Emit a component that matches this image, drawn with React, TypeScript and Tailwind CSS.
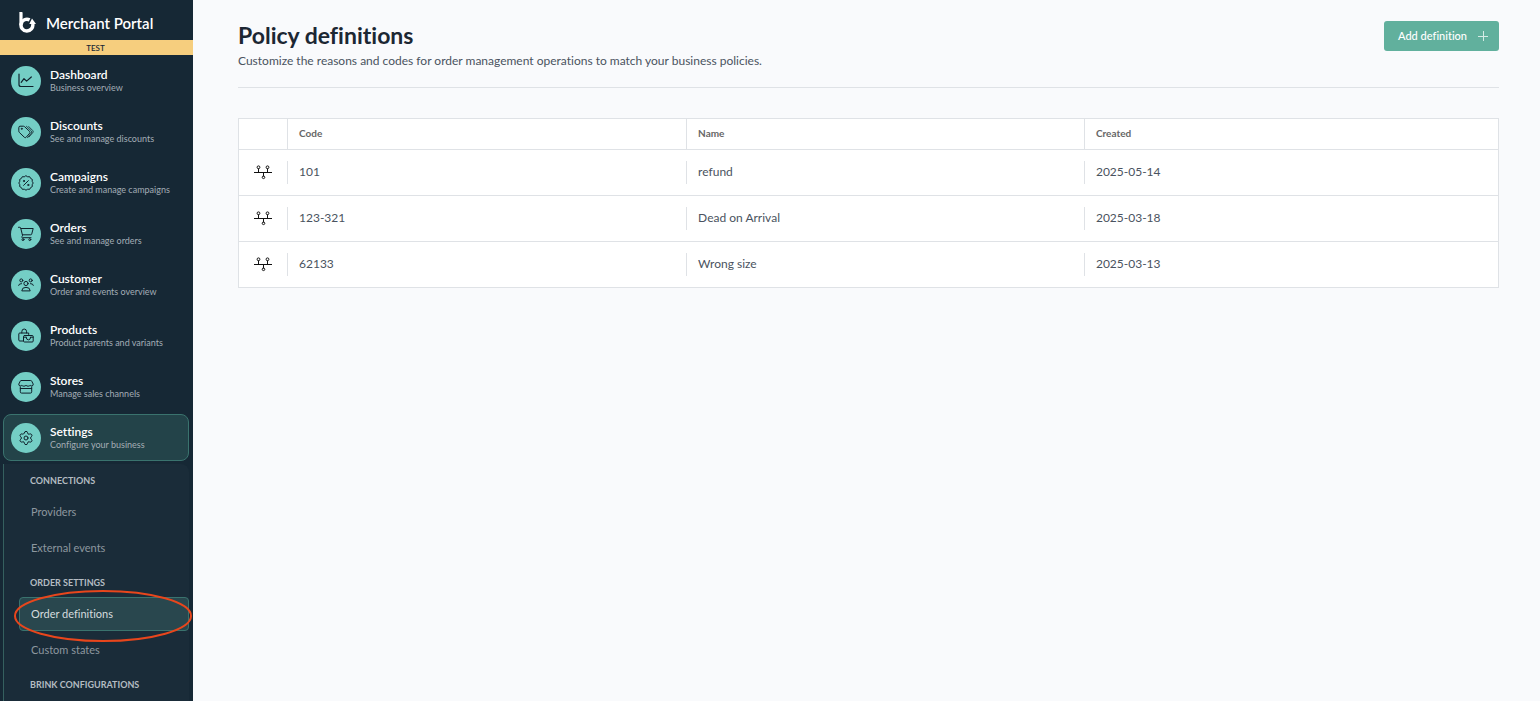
import type { ReactNode } from "react";
import { Settings } from "lucide-react";

function Icon({ children }: { children: ReactNode }) {
  return (
    <svg
      viewBox="0 0 16 16"
      className="size-4"
      fill="none"
      stroke="currentColor"
      strokeWidth="1"
      strokeLinecap="round"
      strokeLinejoin="round"
      aria-hidden="true"
    >
      {children}
    </svg>
  );
}

const sections: { title: string; text: string; icon: ReactNode; active?: boolean }[] = [
  {
    title: "Dashboard",
    text: "Business overview",
    icon: (
      <Icon>
        <path d="M1 1v10.5q0 2 2 2H15" strokeWidth="1.2" />
        <path d="m3.2 9.300 2.800-3.600 2.600 2.400L13.300 4" strokeWidth="1.2" />
      </Icon>
    ),
  },
  {
    title: "Discounts",
    text: "See and manage discounts",
    icon: (
      <Icon>
        <path d="M.8 3.400q0-1.200 1.200-1.200h3.400q.7 0 1.200.5l5 4.700q.9.900.1 1.800l-3.600 4.100q-.8.800-1.700 0L1.300 8.400Q.8 8 .8 7.200z" />
        <path d="M8.400 2.300l5 4.700q1 1 .1 2l-4 4.600M10.700 2.500l4 4q1 1 .1 2.100l-3.700 4.300" strokeWidth=".8" />
        <circle cx="3.700" cy="4.800" r=".5" />
      </Icon>
    ),
  },
  {
    title: "Campaigns",
    text: "Create and manage campaigns",
    icon: (
      <Icon>
        <path d="M8 .8l1.700 1 2-.1.900 1.700 1.700 1-.1 2L15.200 8l-1 1.700.1 1.900-1.700 1-.900 1.700-2-.1-1.700 1-1.700-1-2 .1-.900-1.700-1.700-1 .1-1.900L.8 8l1-1.700-.1-1.900 1.700-1 .900-1.700 2 .1z" />
        <path d="M10.400 5.600l-4.800 4.800" />
        <circle cx="5.900" cy="6" r=".6" />
        <circle cx="10.200" cy="10" r=".6" />
      </Icon>
    ),
  },
  {
    title: "Orders",
    text: "See and manage orders",
    icon: (
      <Icon>
        <path d="M.5 1.300h1.300q.7 0 .9.700l1.800 7.300q.2.900-.6 1.200-.6 1 .5 1.200H13M3 2.500h12.200l-1.500 5.700q-.2.600-.9.600H4.500" />
        <circle cx="5" cy="13.600" r="1" />
        <circle cx="11.800" cy="13.600" r="1" />
      </Icon>
    ),
  },
  {
    title: "Customer",
    text: "Order and events overview",
    icon: (
      <Icon>
        <circle cx="3.300" cy="3.400" r="1.500" />
        <circle cx="12.700" cy="3.400" r="1.500" />
        <circle cx="8" cy="6.500" r="2.100" />
        <path d="M.6 8.400Q.8 6.500 3.500 6.600M15.400 8.400q-.2-1.900-2.900-1.800M3.800 13.500q.1-3.200 4.200-3.200t4.200 3.200z" />
      </Icon>
    ),
  },
  {
    title: "Products",
    text: "Product parents and variants",
    icon: (
      <Icon>
        <path d="M5 13H1.800q-1 0-1-1V6q0-1 1-1h8.900v1.500M3.800 5V3.800Q3.800 1 6.200 1t2.400 2.800V5" />
        <rect x="5.500" y="7.500" width="9.700" height="6.500" rx="1" />
        <path d="M5.500 9.200h2.300M13 9.200h2.200M8.200 9.200q0 2.700 2.200 2.700t2.200-2.700" />
      </Icon>
    ),
  },
  {
    title: "Stores",
    text: "Manage sales channels",
    icon: (
      <Icon>
        <path d="M3.300 1.500h9.400q.8 0 1.100.8L15.200 5q.3 1.500-1.200 2-1.300.2-1.900-.8-.6 1-2 1T8 6.200q-.7 1-2.100 1t-2-1Q3.300 7.200 2 7 .5 6.500.8 5l1.400-2.700q.3-.8 1.100-.8zM2.300 8v4.800q0 1.300 1.300 1.300h8.800q1.300 0 1.300-1.300V8M2.300 9.500h11.400" />
      </Icon>
    ),
  },
  {
    title: "Settings",
    text: "Configure your business",
    active: true,
    icon: <Settings className="size-4" strokeWidth={1.5} aria-hidden="true" />,
  },
];

const groups: { heading: string; items: string[] }[] = [
  { heading: "CONNECTIONS", items: ["Providers", "External events"] },
  { heading: "ORDER SETTINGS", items: ["Order definitions", "Custom states"] },
  { heading: "BRINK CONFIGURATIONS", items: [] },
];

const rows = [
  { code: "101", name: "refund", created: "2025-05-14" },
  { code: "123-321", name: "Dead on Arrival", created: "2025-03-18" },
  { code: "62133", name: "Wrong size", created: "2025-03-13" },
];

function Logo() {
  return (
    <svg viewBox="0 0 18 22" className="h-[22px] w-[18px]" fill="none" aria-hidden="true">
      <path d="M.4 1h2.400q.8 0 .8.800V14H.4z" fill="#fff" />
      <path d="M10.600 8.900A5.900 5.900 0 1 0 13.700 13" stroke="#fff" strokeWidth="3.500" />
      <path d="M10.300 13l2.700-5.500L17 13z" fill="#fff" />
    </svg>
  );
}

function DefinitionIcon() {
  return (
    <svg viewBox="0 0 18 16" className="mx-auto mb-px h-4 w-[18px]" fill="none" stroke="#111" strokeWidth="1" aria-hidden="true">
      <path d="M0 8.500h18M4.500 8.500v-4M13.500 8.500v-4M9.500 8.500v4" />
      <circle cx="4.500" cy="3.300" r="1.400" />
      <circle cx="13.500" cy="3.300" r="1.400" />
      <circle cx="9.500" cy="13.300" r="1.300" />
    </svg>
  );
}

function HeadCell({ children }: { children: ReactNode }) {
  return (
    <th className="border-b border-l border-[#dfe2e6] py-0 pr-0 pl-[11px] font-bold">
      <div className="pb-0.5">{children}</div>
    </th>
  );
}

function Divided({ children }: { children: ReactNode }) {
  return (
    <td className="border-b border-[#dfe2e6] p-0">
      <div className="flex h-[23px] items-center border-l border-[#dfe2e6] pb-0.5 pl-[11px]">{children}</div>
    </td>
  );
}

export default function App() {
  return (
    <div className="flex h-screen overflow-hidden bg-[#f9fafc] font-['Lato','Noto_Sans',sans-serif] text-[#4a5360] [font-variant-ligatures:none]">
      <aside className="flex w-[193px] shrink-0 flex-col overflow-hidden bg-[#162835]">
        <header className="flex h-10 shrink-0 items-center gap-[9px] pt-1 pl-[19px] text-white">
          <Logo />
          <span className="pt-0.5 text-[15px] font-semibold whitespace-nowrap">Merchant Portal</span>
        </header>
        <div className="flex h-[15px] shrink-0 items-center justify-center bg-[#f6ce7e] pr-0.5 text-[8px] font-semibold text-[#162835]">
          TEST
        </div>
        <nav className="flex flex-1 flex-col pt-0.5" aria-label="Main">
          <ul className="flex flex-col gap-1 pr-1 pl-[3px]">
            {sections.map((s) => (
              <li key={s.title}>
                <a
                  href="#"
                  className={
                    s.active
                      ? "flex h-[47px] items-center gap-[9px] rounded-lg border border-[#3a736e] bg-[#234349] pl-[7px]"
                      : "flex h-[47px] items-center gap-[9px] rounded-lg border border-transparent pl-[7px]"
                  }
                >
                  <span className="flex size-[30px] shrink-0 items-center justify-center rounded-full bg-[#74cec5] text-[#10212c]">
                    {s.icon}
                  </span>
                  <span className="flex flex-col whitespace-nowrap">
                    <span className="text-[12px] leading-[14px] font-semibold text-white">{s.title}</span>
                    <span className="text-[9px] leading-3 text-[#a3adb5]">{s.text}</span>
                  </span>
                </a>
              </li>
            ))}
          </ul>
          <div className="mt-[3px] mr-1 ml-[3px] flex flex-1 flex-col gap-0.5 rounded-tr-lg border-l border-[#35605f] bg-[#1a2c39] pt-px pl-[15px]">
            {groups.map((g) => (
              <section key={g.heading} className="flex flex-col gap-0.5">
                <h2 className="pt-2 pb-1 pl-[11px] text-[9px] leading-4 font-bold whitespace-nowrap text-[#b4bcc2]">
                  {g.heading}
                </h2>
                {g.items.map((item) =>
                  item === "Order definitions" ? (
                    <a
                      key={item}
                      href="#"
                      aria-current="page"
                      className="relative flex h-[34px] items-center rounded border border-[#3a736e] bg-[#29474e] pl-[11px] text-[11px] text-[#d5dcdf]"
                    >
                      {item}
                      <svg
                        viewBox="0 0 178 52"
                        className="pointer-events-none absolute -top-2 -left-1.5 h-[52px] w-[178px]"
                        aria-hidden="true"
                      >
                        <ellipse cx="89" cy="26" rx="88" ry="25" fill="none" stroke="#e8461c" strokeWidth="2" />
                      </svg>
                    </a>
                  ) : (
                    <a
                      key={item}
                      href="#"
                      className="flex h-[34px] items-center rounded border border-transparent pl-[11px] text-[11px] text-[#8d979f]"
                    >
                      {item}
                    </a>
                  ),
                )}
              </section>
            ))}
          </div>
        </nav>
      </aside>

      <main className="min-w-0 flex-1 pt-[21px] pr-[41px] pl-[45px]">
        <header className="flex items-start justify-between border-b border-[#dfe2e6] pb-[18px]">
          <div>
            <h1 className="text-[23px] leading-7 font-bold text-[#1c2733]">Policy definitions</h1>
            <p className="mt-1 text-[12px] leading-4">
              Customize the reasons and codes for order management operations to match your business policies.
            </p>
          </div>
          <button
            type="button"
            className="flex h-[30px] items-center gap-[11px] rounded-[3px] bg-[#61b09d] pr-[11px] pl-3.5 text-[11px] font-medium text-white"
          >
            Add definition
            <svg viewBox="0 0 10 10" className="size-2.5" stroke="#d5ebe5" strokeWidth="1" aria-hidden="true">
              <path d="M0 5.500h10M5.500 0v10" />
            </svg>
          </button>
        </header>

        <table className="mt-[30px] w-full table-fixed border-separate border-spacing-0 border-x border-t border-[#dfe2e6] bg-white text-left">
          <colgroup>
            <col className="w-12" />
            <col className="w-[31.7%]" />
            <col className="w-[31.6%]" />
            <col />
          </colgroup>
          <thead>
            <tr className="h-[31px] text-[10px] text-[#666]">
              <td className="border-b border-[#dfe2e6] p-0" />
              <HeadCell>Code</HeadCell>
              <HeadCell>Name</HeadCell>
              <HeadCell>Created</HeadCell>
            </tr>
          </thead>
          <tbody>
            {rows.map((r) => (
              <tr key={r.code} className="h-[46px] text-[12px]">
                <td className="border-b border-[#dfe2e6] p-0">
                  <DefinitionIcon />
                </td>
                <Divided>{r.code}</Divided>
                <Divided>{r.name}</Divided>
                <Divided>{r.created}</Divided>
              </tr>
            ))}
          </tbody>
        </table>
      </main>
    </div>
  );
}
